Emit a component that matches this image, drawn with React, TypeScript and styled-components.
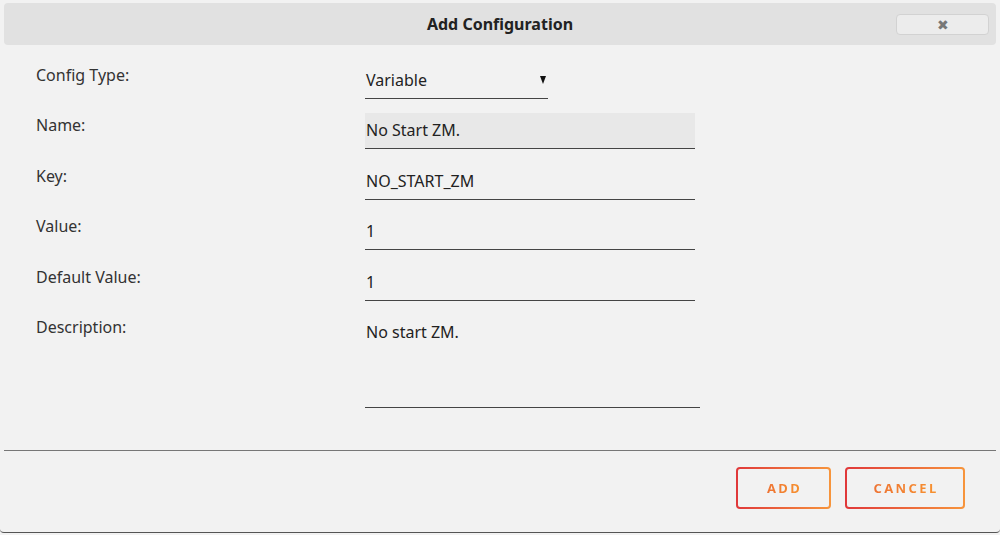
import React from "react";
import styled, { createGlobalStyle } from "styled-components";

const GlobalStyle = createGlobalStyle`
  html, body {
    margin: 0;
    padding: 0;
    background: #f2f2f2;
    font-family: "Noto Sans", "Open Sans", sans-serif;
    color: #333;
  }
`;

const Dialog = styled.div`
  width: 1000px;
  height: 533px;
  box-sizing: border-box;
  background: #f2f2f2;
  border-bottom: 1px solid #555;
  border-radius: 0 0 4px 4px;
  padding: 3px 4px 0;
  display: flex;
  flex-direction: column;
`;

const Header = styled.div`
  height: 42px;
  background: #e1e1e1;
  border-radius: 4px;
  display: flex;
  align-items: center;
  justify-content: center;
  position: relative;
`;

const Title = styled.h1`
  margin: 0;
  font-size: 16px;
  font-weight: 700;
  color: #222;
`;

const CloseButton = styled.button`
  position: absolute;
  right: 7px;
  top: 11px;
  width: 93px;
  height: 21px;
  background: #ececec;
  border: 1px solid #d2d2d2;
  border-radius: 4px;
  color: #777;
  font-size: 14px;
  display: flex;
  align-items: center;
  justify-content: center;
  padding: 0;
`;

const Form = styled.div`
  display: grid;
  grid-template-columns: 329px 1fr;
  row-gap: 14.4px;
  padding: 18px 0 0 32px;
`;

const Label = styled.div`
  font-size: 16px;
  line-height: 24px;
  color: #333;
`;

const Field = styled.div<{ $width: number; $filled?: boolean; $height?: number }>`
  width: ${(p) => p.$width}px;
  height: ${(p) => p.$height ?? 36}px;
  box-sizing: border-box;
  background: ${(p) => (p.$filled ? "#e8e8e8" : "transparent")};
  border-bottom: 1px solid #444;
  font-size: 16px;
  color: #222;
  padding: 6px 1px 0;
  display: flex;
  align-items: flex-start;
  justify-content: space-between;
`;

const Arrow = styled.span`
  width: 0;
  height: 0;
  border-left: 3.5px solid transparent;
  border-right: 3.5px solid transparent;
  border-top: 8px solid #111;
  margin-top: 7px;
  margin-right: 1px;
`;

const Divider = styled.hr`
  margin: 42px 0 0;
  border: none;
  border-top: 1px solid #777;
`;

const Footer = styled.div`
  display: flex;
  justify-content: flex-end;
  gap: 14px;
  padding: 16px 31px 0 0;
`;

const ActionButton = styled.button<{ $width: number }>`
  width: ${(p) => p.$width}px;
  height: 42px;
  border: 2px solid transparent;
  border-radius: 4px;
  background: linear-gradient(#f2f2f2, #f2f2f2) padding-box,
    linear-gradient(90deg, #e0383a, #f7953c) border-box;
  font-family: "Noto Sans", sans-serif;
  font-size: 13px;
  font-weight: 700;
  letter-spacing: 2.4px;
  padding: 0 0 0 2px;
  display: flex;
  align-items: center;
  justify-content: center;
`;

const GradientText = styled.span`
  background: linear-gradient(90deg, #ee7434, #f7922f);
  -webkit-background-clip: text;
  background-clip: text;
  color: transparent;
`;

const fields = [
  { label: "Config Type:", value: "Variable", width: 183, select: true },
  { label: "Name:", value: "No Start ZM.", width: 330, filled: true },
  { label: "Key:", value: "NO_START_ZM", width: 330 },
  { label: "Value:", value: "1", width: 330 },
  { label: "Default Value:", value: "1", width: 330 },
  { label: "Description:", value: "No start ZM.", width: 335, height: 93 },
];

export default function App() {
  return (
    <>
      <GlobalStyle />
      <Dialog>
        <Header>
          <Title>Add Configuration</Title>
          <CloseButton>✖</CloseButton>
        </Header>
        <Form>
          {fields.map((f) => (
            <React.Fragment key={f.label}>
              <Label>{f.label}</Label>
              <Field $width={f.width} $filled={f.filled} $height={f.height}>
                <span>{f.value}</span>
                {f.select && <Arrow />}
              </Field>
            </React.Fragment>
          ))}
        </Form>
        <Divider />
        <Footer>
          <ActionButton $width={95}>
            <GradientText>ADD</GradientText>
          </ActionButton>
          <ActionButton $width={120}>
            <GradientText>CANCEL</GradientText>
          </ActionButton>
        </Footer>
      </Dialog>
    </>
  );
}
